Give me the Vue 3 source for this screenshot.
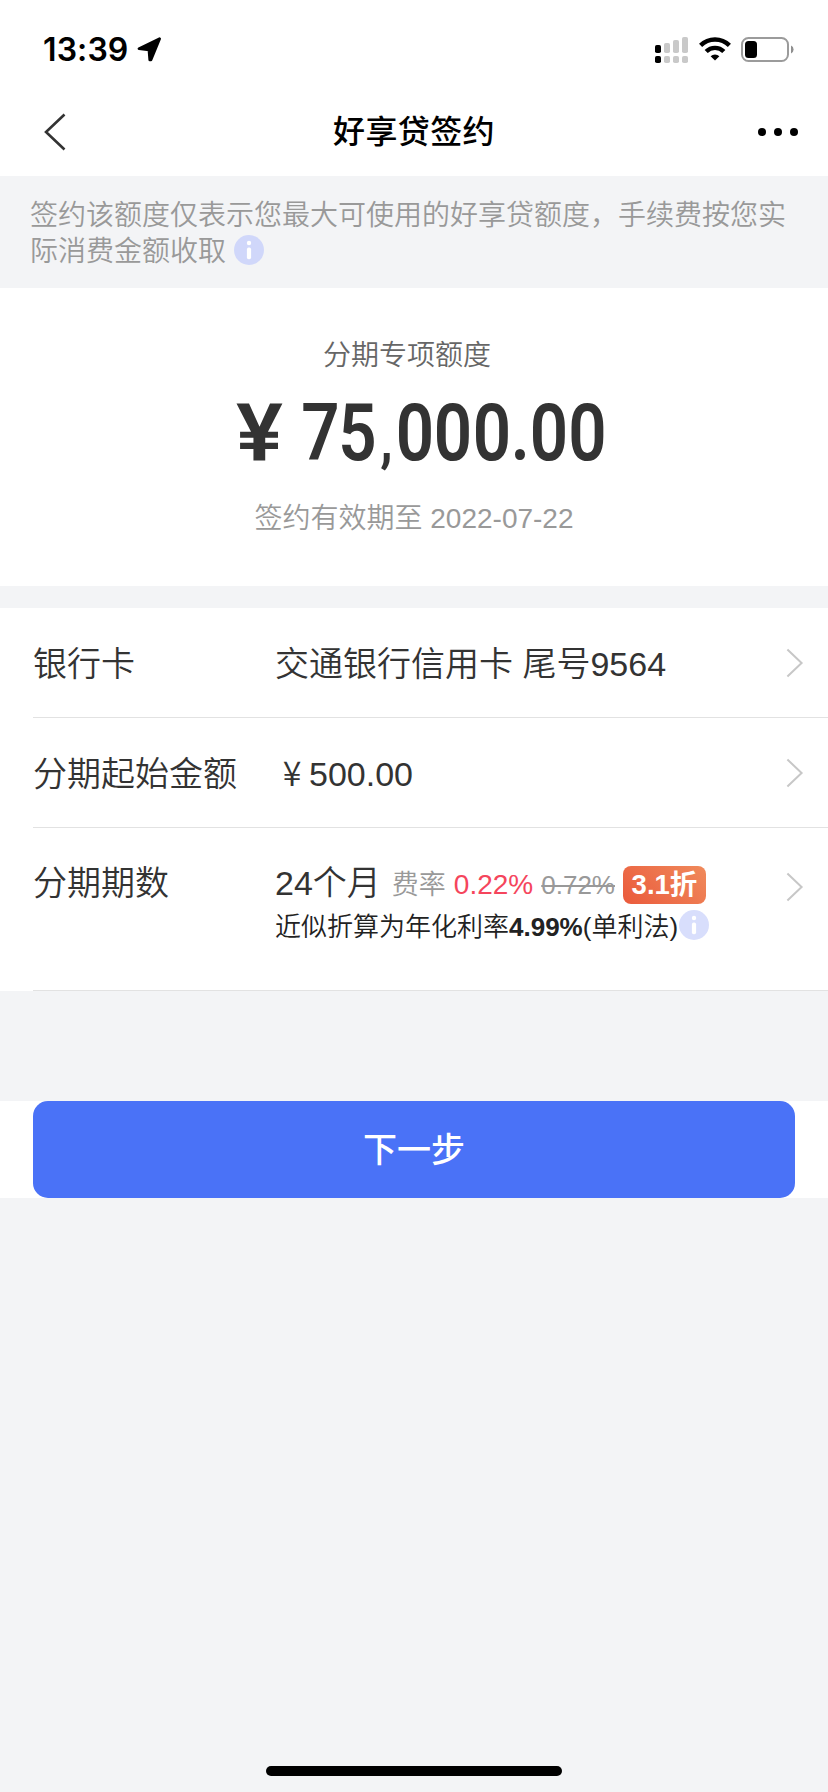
<script setup>
const squeeze = 0.84
const glyphCenters = [320.5, 357.5, 386.5, 415, 453, 492, 520.2, 549, 587.5]
const amountX = glyphCenters.map((c) => ((c - 214) / squeeze).toFixed(2)).join(' ')
const bars = [
  { x: 0, y: 8, h: 8 },
  { x: 9, y: 6, h: 10 },
  { x: 18, y: 3, h: 13 },
  { x: 27, y: 0, h: 16 }
]
</script>

<template>
  <div class="page">
    <header class="top">
      <div class="status">
        <span class="time">13:39</span>
        <svg class="loc" width="26" height="26" viewBox="0 0 26 26">
          <path d="M22.6 1.7 L2 11.7 L12 12.8 L12.8 22.8 L14 22.8 Z" fill="#000" stroke="#000" stroke-width="2.8" stroke-linejoin="round" />
        </svg>
        <svg class="signal" width="33" height="26" viewBox="0 0 33 26">
          <g v-for="(b, i) in bars" :key="i" :fill="i === 0 ? '#000' : '#c9c9c9'">
            <rect :x="b.x" :y="b.y" width="6" :height="b.h" rx="1.8" />
            <rect :x="b.x" y="19" width="6" height="7" rx="1.8" />
          </g>
        </svg>
        <svg class="wifi" width="32" height="24" viewBox="0 0 32 24">
          <g fill="none" stroke="#000" stroke-width="4.4">
            <path d="M1.6 8.4 A20.4 20.4 0 0 1 30.4 8.4" />
            <path d="M7.2 14.5 A12.4 12.4 0 0 1 24.8 14.5" />
          </g>
          <path d="M16 23.6 L11.6 19.2 A6.4 6.4 0 0 1 20.4 19.2 Z" fill="#000" />
        </svg>
        <svg class="battery" width="53" height="25" viewBox="0 0 53 25">
          <rect x="1" y="1" width="46" height="23" rx="6.5" fill="none" stroke="#9b9b9b" stroke-width="2" />
          <rect x="4" y="4" width="12" height="17" rx="3.5" fill="#000" />
          <path d="M50 8.5 A4.4 4.4 0 0 1 50 16.5 Z" fill="#8f8f8f" />
        </svg>
      </div>
      <div class="nav">
        <svg class="back" width="24" height="40" viewBox="0 0 24 40">
          <path d="M21.5 2.5 L3 20 L21.5 37.5" fill="none" stroke="#333" stroke-width="2.6" />
        </svg>
        <h1 class="title">好享贷签约</h1>
        <svg class="more" width="40" height="8" viewBox="0 0 40 8">
          <circle cx="4" cy="4" r="4" /><circle cx="20" cy="4" r="4" /><circle cx="36" cy="4" r="4" />
        </svg>
      </div>
    </header>

    <p class="notice">签约该额度仅表示您最大可使用的好享贷额度，手续费按您实际消费金额收取<svg class="info" width="30" height="30" viewBox="0 0 30 30">
      <circle cx="15" cy="15" r="15" fill="#d0d7fa" />
      <circle cx="15" cy="8" r="2.2" fill="#fff" />
      <rect x="12.9" y="12.6" width="4.2" height="11.6" rx="1.8" fill="#fff" />
    </svg></p>

    <section class="quota">
      <div class="quota-label">分期专项额度</div>
      <svg class="amount" width="400" height="120" viewBox="0 0 400 120">
        <text class="amount-text" transform="scale(1.1 1)" x="41.4" y="87">¥</text>
        <text class="amount-text" :transform="`scale(${squeeze} 1)`" :x="amountX" y="87">75<tspan class="comma">,</tspan>000.00</text>
      </svg>
      <div class="quota-date">签约有效期至 2022-07-22</div>
    </section>

    <section class="list">
      <div class="row">
        <span class="label">银行卡</span>
        <span class="value">交通银行信用卡 尾号9564</span>
        <svg class="arrow" width="18" height="30" viewBox="0 0 18 30"><path d="M1.4 1.5 L15.6 15 L1.4 28.5" /></svg>
      </div>
      <div class="row">
        <span class="label">分期起始金额</span>
        <span class="value"><span class="yen">¥</span>500.00</span>
        <svg class="arrow" width="18" height="30" viewBox="0 0 18 30"><path d="M1.4 1.5 L15.6 15 L1.4 28.5" /></svg>
      </div>
      <div class="row tall">
        <span class="label">分期期数</span>
        <div class="value">
          <div class="term">
            <span class="months">24个月</span>
            <span class="fee">费率</span>
            <span class="rate">0.22%</span>
            <s class="old">0.72%</s>
            <span class="badge">3.1折</span>
          </div>
          <div class="annual">近似折算为年化利率<b>4.99%</b>(单利法)<svg class="info-light" width="30" height="30" viewBox="0 0 30 30">
            <circle cx="15" cy="15" r="15" fill="#d8defc" />
            <circle cx="15" cy="8" r="2.2" fill="#fff" />
            <rect x="12.9" y="12.6" width="4.2" height="11.6" rx="1.8" fill="#fff" />
          </svg></div>
        </div>
        <svg class="arrow" width="18" height="30" viewBox="0 0 18 30"><path d="M1.4 1.5 L15.6 15 L1.4 28.5" /></svg>
      </div>
    </section>

    <div class="action">
      <button class="next">下一步</button>
    </div>

    <div class="home"></div>
  </div>
</template>

<style>
body {
  margin: 0;
  background: #f3f4f6;
}
</style>

<style scoped>
.page {
  width: 828px;
  height: 1792px;
  display: flex;
  flex-direction: column;
  overflow: hidden;
  background: #f3f4f6;
  color: #333;
  font-family: "Liberation Sans", "Noto Sans CJK SC", sans-serif;
  font-weight: 350;
}
.top {
  height: 176px;
  background: #fff;
}
.status {
  height: 88px;
  display: flex;
  align-items: flex-start;
}
.time {
  width: 84px;
  margin: 30px 0 0 43px;
  font: 600 32px/40px Inter, sans-serif;
  letter-spacing: 0.1px;
  color: #000;
}
.loc { margin: 37px 0 0 10px; }
.signal { margin: 37px 0 0 auto; }
.wifi { margin: 37px 0 0 11px; }
.battery { margin: 37px 34px 0 10px; }
.nav {
  height: 88px;
  display: grid;
  grid-template-columns: 170px 1fr 170px;
  align-items: center;
}
.back { margin-left: 43px; }
.title {
  margin: 0;
  text-align: center;
  font-size: 32px;
  line-height: 44px;
  font-weight: 500;
  letter-spacing: 0.4px;
  color: #000;
}
.more {
  justify-self: end;
  margin-right: 30px;
}
.notice {
  box-sizing: border-box;
  height: 112px;
  margin: 0;
  padding: 22px 30px 0;
  font-size: 28px;
  line-height: 36px;
  color: #999;
}
.info {
  margin: -6px 0 -6px 8px;
  vertical-align: 2px;
}
.quota {
  box-sizing: border-box;
  height: 298px;
  padding-top: 48px;
  background: #fff;
  display: flex;
  flex-direction: column;
  align-items: center;
}
.quota-label {
  margin-right: 14px;
  font-size: 28px;
  line-height: 40px;
  color: #666;
}
.amount {
  flex-shrink: 0;
  margin: -3px 0 -10px;
}
.amount-text {
  font-family: Roboto, sans-serif;
  font-weight: 600;
  font-size: 80px;
  text-anchor: middle;
  fill: #333;
}
.comma {
  font-size: 60px;
  font-weight: 700;
}
.quota-date {
  margin-top: 16px;
  font-size: 28px;
  line-height: 40px;
  color: #999;
}
.list {
  margin-top: 22px;
  background: #fff;
}
.row {
  box-sizing: border-box;
  height: 110px;
  margin-left: 33px;
  padding-right: 24px;
  border-bottom: 1px solid #e2e2e2;
  display: flex;
  align-items: center;
  font-size: 34px;
  line-height: 48px;
}
.label {
  width: 242px;
  padding-top: 2px;
}
.value {
  flex: 1;
  padding-top: 2px;
  white-space: nowrap;
}
.yen {
  display: inline-block;
  width: 34px;
  text-align: center;
  font-family: "Noto Sans CJK SC", sans-serif;
  line-height: 1;
}
.arrow {
  fill: none;
  stroke: #c7c7c7;
  stroke-width: 2;
}
.tall {
  height: 163px;
  align-items: flex-start;
  padding-top: 29px;
}
.tall .arrow { margin-top: 15px; }
.term {
  display: flex;
  height: 48px;
}
.fee {
  margin-left: 11px;
  font-size: 27px;
  line-height: 52px;
  color: #999;
}
.rate {
  margin-left: 8px;
  font-size: 28px;
  line-height: 52px;
  color: #f5455c;
}
.old {
  margin-left: 8px;
  font-size: 26px;
  line-height: 53px;
  color: #999;
  text-decoration-thickness: 2px;
}
.badge {
  width: 83px;
  height: 38px;
  margin: 7px 0 0 8px;
  border-radius: 8px;
  background: linear-gradient(45deg, #ea5a3c, #f08a5b);
  color: #fff;
  font-size: 27.5px;
  line-height: 38px;
  font-weight: 700;
  text-align: center;
}
.annual {
  display: flex;
  align-items: center;
  height: 34px;
  margin-top: 3px;
  font-size: 26px;
  line-height: 34px;
  color: #222;
}
.annual b { font-weight: 700; }
.info-light { margin: -4px 0 0 1px; }
.action {
  height: 97px;
  margin-top: 110px;
  padding: 0 33px;
  background: #fff;
}
.next {
  display: block;
  width: 100%;
  height: 97px;
  padding: 0 0 4px;
  border: 0;
  border-radius: 15px;
  background: #4a72f7;
  color: #fff;
  font-family: inherit;
  font-size: 34px;
  font-weight: 500;
}
.home {
  width: 296px;
  height: 10px;
  margin: auto auto 16px;
  border-radius: 5px;
  background: #000;
}
</style>
